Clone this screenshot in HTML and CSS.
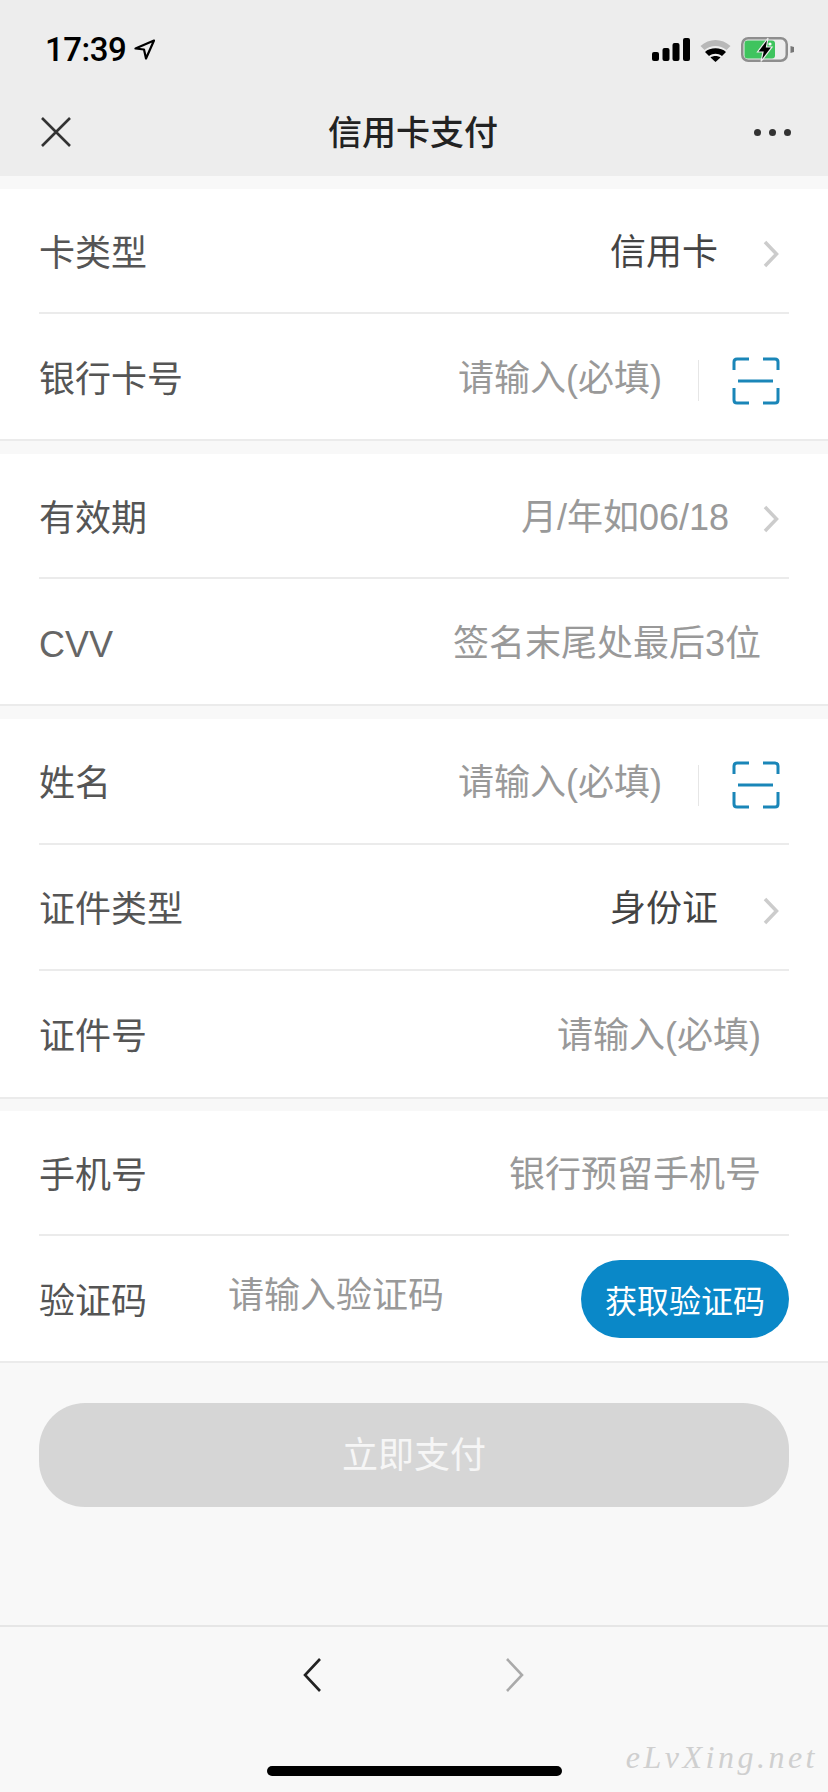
FILE: index.html
```html
<!DOCTYPE html>
<html lang="zh">
<head>
    <meta charset="UTF-8" />
    <title>信用卡支付</title>
    <meta name="viewport" content="width=device-width, initial-scale=1" />
    <link rel="stylesheet" href="styles.css">
</head>
<body>
    <header class="top">
        <div class="status">
            <div class="clock">
                <span>17:39</span>
                <svg width="21" height="21" viewBox="0 0 21 21"><path d="M20 1.5 L1.5 9.5 L10 10.5 L12 19.5 Z" fill="none" stroke="#000" stroke-width="2.2" stroke-linejoin="round"/></svg>
            </div>
            <div class="status-icons">
                <svg width="38" height="23" viewBox="0 0 38 23"><rect x="0" y="14" width="7" height="9" rx="2" fill="#000"/><rect x="10.5" y="10" width="7" height="13" rx="2" fill="#000"/><rect x="20.5" y="5" width="7" height="18" rx="2" fill="#000"/><rect x="31" y="0" width="7" height="23" rx="2" fill="#000"/></svg>
                <svg width="31" height="24" viewBox="0 0 31 24"><path d="M0.5 8 C9 0 22 0 30.5 8 L26.5 12 C20 6.5 11 6.5 4.5 12 Z" fill="#b8b8b8"/><path d="M5 14 C10 9 21 9 26 14 L22 18 C18 15 13 15 9 18 Z" fill="#000"/><path d="M10.5 19.5 C13 17.5 18 17.5 20.5 19.5 L15.5 24 Z" fill="#000"/></svg>
                <svg width="53" height="25" viewBox="0 0 53 25">
                    <rect x="1.25" y="1.25" width="44.5" height="22.5" rx="6" fill="none" stroke="#8e8e8e" stroke-width="2.5"/>
                    <rect x="3.5" y="3.5" width="30.5" height="18" rx="3" fill="#3fc45e"/>
                    <circle cx="29" cy="7" r="1.6" fill="#fff"/>
                    <path d="M49.5 9 L53 10 L53 15 L49.5 16 Z" fill="#777"/>
                    <path d="M27 1 L16.5 15 L22 15 L20 24.5 L31 10 L25.5 10 Z" fill="#000" stroke="#ededed" stroke-width="1.2"/>
                </svg>
            </div>
        </div>
        <div class="navbar">
            <svg width="32" height="32" viewBox="0 0 32 32"><path d="M2 2 L30 30 M30 2 L2 30" stroke="#333" stroke-width="2.6" fill="none"/></svg>
            <h1>信用卡支付</h1>
            <div class="dots"><i></i><i></i><i></i></div>
        </div>
    </header>

    <main class="content">
        <section class="group">
            <div class="row">
                <span class="label">卡类型</span>
                <span class="value">信用卡</span>
                <svg class="arrow" width="16" height="28" viewBox="0 0 16 28"><path d="M2 2 L13.5 14 L2 26" fill="none" stroke="#ccc" stroke-width="3.5"/></svg>
            </div>
            <div class="row">
                <span class="label">银行卡号</span>
                <span class="hint">请输入(必填)</span>
                <span class="divider"></span>
                <svg class="scan" width="48" height="48" viewBox="0 0 48 48"><path d="M2 13 V5 Q2 2 5 2 H17 M31 2 H43 Q46 2 46 5 V13 M2 31 V43 Q2 46 5 46 H17 M31 46 H43 Q46 46 46 43 V31" fill="none" stroke="#1a86b8" stroke-width="3"/><path d="M6 24 H41" stroke="#1a86b8" stroke-width="3"/></svg>
            </div>
        </section>

        <section class="group">
            <div class="row">
                <span class="label">有效期</span>
                <span class="hint">月/年如06/18</span>
                <svg class="arrow" width="16" height="28" viewBox="0 0 16 28"><path d="M2 2 L13.5 14 L2 26" fill="none" stroke="#ccc" stroke-width="3.5"/></svg>
            </div>
            <div class="row">
                <span class="label cvv">CVV</span>
                <span class="hint plain">签名末尾处最后3位</span>
            </div>
        </section>

        <section class="group tall">
            <div class="row">
                <span class="label">姓名</span>
                <span class="hint">请输入(必填)</span>
                <span class="divider"></span>
                <svg class="scan" width="48" height="48" viewBox="0 0 48 48"><path d="M2 13 V5 Q2 2 5 2 H17 M31 2 H43 Q46 2 46 5 V13 M2 31 V43 Q2 46 5 46 H17 M31 46 H43 Q46 46 46 43 V31" fill="none" stroke="#1a86b8" stroke-width="3"/><path d="M6 24 H41" stroke="#1a86b8" stroke-width="3"/></svg>
            </div>
            <div class="row">
                <span class="label">证件类型</span>
                <span class="value">身份证</span>
                <svg class="arrow" width="16" height="28" viewBox="0 0 16 28"><path d="M2 2 L13.5 14 L2 26" fill="none" stroke="#ccc" stroke-width="3.5"/></svg>
            </div>
            <div class="row">
                <span class="label">证件号</span>
                <span class="hint plain">请输入(必填)</span>
            </div>
        </section>

        <section class="group last">
            <div class="row">
                <span class="label">手机号</span>
                <span class="hint plain">银行预留手机号</span>
            </div>
            <div class="row code-row">
                <span class="label">验证码</span>
                <span class="hint code-hint">请输入验证码</span>
                <a class="code-btn">获取验证码</a>
            </div>
        </section>

        <div class="pay-wrap">
            <a class="pay-btn">立即支付</a>
        </div>
    </main>

    <footer class="bottom">
        <div class="nav-arrows">
            <svg width="20" height="36" viewBox="0 0 20 36"><path d="M18 2 L3 18 L18 34" fill="none" stroke="#222" stroke-width="2.6"/></svg>
            <svg width="20" height="36" viewBox="0 0 20 36"><path d="M3 2 L18 18 L3 34" fill="none" stroke="#aaa" stroke-width="2.6"/></svg>
        </div>
        <div class="home-bar"></div>
        <span class="watermark">eLvXing.net</span>
    </footer>
</body>
</html>
```

FILE: styles.css
```css
* {
    box-sizing: border-box;
}

body {
    margin: 0;
    width: 828px;
    height: 1792px;
    display: flex;
    flex-direction: column;
    overflow: hidden;
    font-family: "Liberation Sans", "Noto Sans CJK SC", sans-serif;
    background-color: #f8f8f8;
    color: #555;
}

.top {
    height: 176px;
    background-color: #ededed;
    flex: none;
}

.status {
    height: 88px;
    padding: 11px 34px 0 45px;
    display: flex;
    align-items: center;
    justify-content: space-between;
}

.clock {
    display: flex;
    align-items: center;
    gap: 8px;
    font-family: Roboto, sans-serif;
    font-weight: 500;
    font-size: 33px;
    letter-spacing: -0.5px;
    color: #000;
}

.status-icons {
    display: flex;
    align-items: center;
    gap: 10px;
}

.navbar {
    height: 88px;
    padding: 0 37px 0 40px;
    display: flex;
    align-items: center;
    justify-content: space-between;
}

    .navbar h1 {
        margin: 0;
        padding-bottom: 4px;
        font-size: 34px;
        font-weight: 500;
        color: #222;
    }

.dots {
    display: flex;
    gap: 8px;
}

    .dots i {
        width: 7px;
        height: 7px;
        border-radius: 50%;
        background-color: #333;
    }

.content {
    flex: 1;
    padding-top: 13px;
}

.group {
    background-color: #fff;
    padding-left: 39px;
    margin-bottom: 13px;
    border-bottom: 2px solid #ebebeb;
}

    .group.tall {
        margin-bottom: 12px;
    }

        .group.tall .row {
            height: 126px;
        }

    .group.last {
        margin-bottom: 0;
    }

.row {
    height: 125px;
    margin-right: 39px;
    display: flex;
    align-items: center;
    border-bottom: 2px solid #ebebeb;
    font-size: 36px;
}

    .row:last-child {
        border-bottom: none;
    }

.label {
    flex: 1;
    padding-bottom: 2px;
    color: #555;
}

    .label.cvv {
        padding: 6px 0 0;
        color: #666;
    }

.value {
    padding-bottom: 4px;
    color: #444;
}

.hint {
    padding-bottom: 4px;
    color: #999;
}

    .hint.plain {
        padding-right: 28px;
    }

.arrow {
    margin: 7px 10px 0 45px;
}

.hint + .arrow {
    margin-left: 34px;
}

.divider {
    width: 1px;
    height: 41px;
    margin: 8px 33px 0 36px;
    background-color: #e6e6e6;
}

.scan {
    margin: 8px 9px 0 0;
}

.code-row .label {
    flex: none;
    width: 189px;
    padding: 0 0 2px;
}

.code-hint {
    flex: 1;
    padding-bottom: 14px;
}

.code-btn {
    width: 208px;
    height: 78px;
    border-radius: 39px;
    background-color: #0a88c8;
    color: #fff;
    font-size: 32px;
    display: flex;
    align-items: center;
    justify-content: center;
}

.pay-wrap {
    padding: 40px 39px 0;
}

.pay-btn {
    height: 104px;
    padding-bottom: 6px;
    border-radius: 46px;
    background-color: #d6d6d6;
    color: #f6f6f6;
    font-size: 36px;
    display: flex;
    align-items: center;
    justify-content: center;
}

.bottom {
    position: relative;
    height: 167px;
    flex: none;
    border-top: 2px solid #e6e6e6;
    background-color: #f8f8f8;
}

.nav-arrows {
    padding: 30px 0 0 302px;
    display: flex;
    gap: 182px;
}

.home-bar {
    width: 295px;
    height: 10px;
    margin: 73px 0 0 267px;
    border-radius: 5px;
    background-color: #000;
}

.watermark {
    position: absolute;
    right: 10px;
    bottom: 16px;
    font-family: "Liberation Serif", serif;
    font-style: italic;
    font-size: 32px;
    letter-spacing: 3.5px;
    color: #cfcfcf;
}
```
